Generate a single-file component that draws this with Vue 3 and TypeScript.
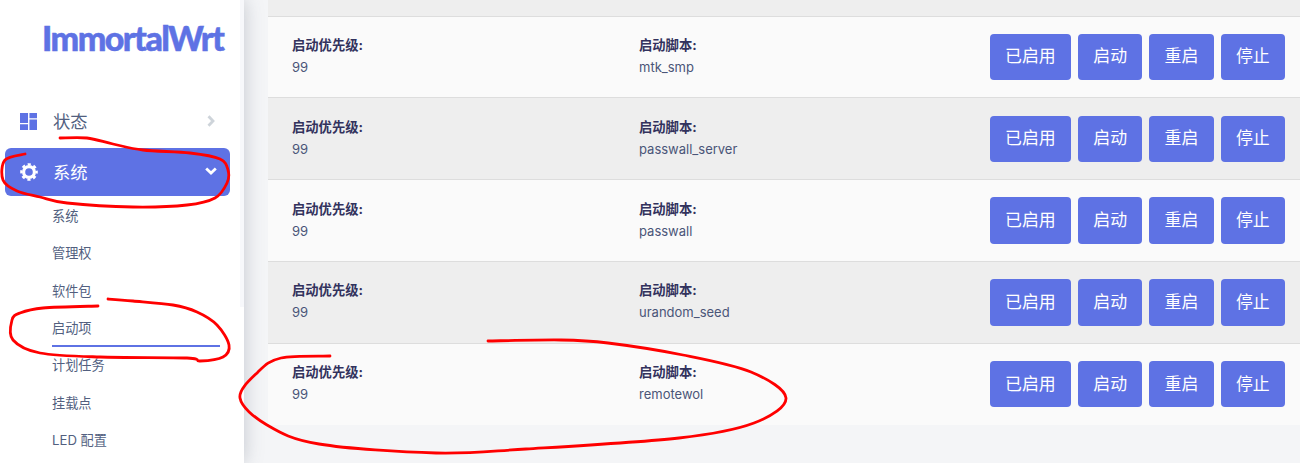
<script setup lang="ts">
type Pt = [number, number]

const rows: { name: string; even: boolean }[] = [
  { name: 'mtk_smp', even: false },
  { name: 'passwall_server', even: true },
  { name: 'passwall', even: false },
  { name: 'urandom_seed', even: true },
  { name: 'remotewol', even: false },
]
const actions = ['已启用', '启动', '重启', '停止']
const subItems = ['系统', '管理权', '软件包', '启动项', '计划任务', '挂载点', 'LED 配置']

function smooth(points: Pt[]): string {
  let d = `M${points[0][0]} ${points[0][1]}`
  for (let i = 0; i < points.length - 1; i++) {
    const p0 = points[Math.max(i - 1, 0)]
    const p1 = points[i]
    const p2 = points[i + 1]
    const p3 = points[Math.min(i + 2, points.length - 1)]
    const c1x = p1[0] + (p2[0] - p0[0]) / 6
    const c1y = p1[1] + (p2[1] - p0[1]) / 6
    const c2x = p2[0] - (p3[0] - p1[0]) / 6
    const c2y = p2[1] - (p3[1] - p1[1]) / 6
    d += ` C${c1x.toFixed(1)} ${c1y.toFixed(1)} ${c2x.toFixed(1)} ${c2y.toFixed(1)} ${p2[0]} ${p2[1]}`
  }
  return d
}

const marks: string[] = [
  smooth([[60, 138], [87, 138], [113, 144], [143, 150], [190, 153], [220, 159], [228, 170], [227, 183], [215, 198], [187, 205], [133, 207], [67, 203], [40, 197], [17, 191], [3, 180], [5, 160], [25, 154]]),
  smooth([[98, 306], [43, 308], [20, 313], [12, 320], [13, 340], [40, 353], [100, 357], [187, 358], [200, 361], [223, 357], [229, 345], [217, 325], [197, 312], [173, 305], [133, 301], [108, 299]]),
  smooth([[330, 356], [281, 358], [258, 372], [240, 398], [267, 425], [319, 444], [436, 453], [526, 449], [679, 438], [754, 423], [786, 398], [751, 372], [683, 355], [608, 343], [561, 340], [488, 341]]),
]
</script>

<template>
  <div class="page">
    <aside class="sidebar">
      <div class="scroll-thumb"></div>
      <div class="logo">ImmortalWrt</div>
      <nav class="nav">
        <a class="top-item">
          <svg class="icon" viewBox="0 0 18 18" fill="#5e72e4">
            <path d="M0 0h8.5v10.5H0zM10 0h8v5.5h-8zM0 12h8.5v6H0zM10 7h8v11h-8z" />
          </svg>
          <span class="top-label">状态</span>
          <svg class="chev" viewBox="0 0 8 12" fill="none" stroke="#ced4da" stroke-width="2.8">
            <path d="M1.5 1.2L6 6l-4.5 4.8" />
          </svg>
        </a>
        <a class="top-item active">
          <svg class="icon" viewBox="0 0 18 18" fill="none" stroke="#fff">
            <circle cx="9" cy="9" r="5.4" stroke-width="3.2" />
            <circle cx="9" cy="9" r="7.7" stroke-width="2.2" stroke-dasharray="3.2 2.85" stroke-dashoffset="1.6" />
          </svg>
          <span class="top-label">系统</span>
          <svg class="chev-down" viewBox="0 0 12 8" fill="none" stroke="#fff" stroke-width="2.8">
            <path d="M1.2 1.5L6 6l4.8-4.5" />
          </svg>
        </a>
        <ul class="sub">
          <li v-for="item in subItems" :key="item" class="sub-item" :class="{ current: item === '启动项' }">{{ item }}</li>
        </ul>
      </nav>
    </aside>

    <main class="main">
      <div class="top-stripe"></div>
      <div v-for="row in rows" :key="row.name" class="row" :class="{ even: row.even }">
        <div class="cell">
          <div class="label">启动优先级:</div>
          <div class="value">99</div>
        </div>
        <div class="cell">
          <div class="label">启动脚本:</div>
          <div class="value">{{ row.name }}</div>
        </div>
        <div class="actions">
          <button v-for="a in actions" :key="a" class="btn" type="button">{{ a }}</button>
        </div>
      </div>
    </main>

    <svg class="marks" viewBox="0 0 1300 463" fill="none" stroke="#f00" stroke-width="2.8" stroke-linecap="round" stroke-linejoin="round">
      <path v-for="(d, i) in marks" :key="i" :d="d" />
    </svg>
  </div>
</template>

<style>
html, body { margin: 0; padding: 0; overflow: hidden; }
</style>

<style scoped>
.page {
  position: relative;
  display: flex;
  width: 1300px;
  height: 463px;
  overflow: hidden;
  background: #f4f5f7;
  font-family: Inter, "Noto Sans CJK SC", sans-serif;
  color: #525f7f;
}
.sidebar {
  position: relative;
  z-index: 1;
  flex: 0 0 244px;
  box-sizing: border-box;
  background: #fff;
  box-shadow: 0 0 18px rgba(70, 80, 100, 0.28);
}
.scroll-thumb {
  position: absolute;
  top: 0;
  right: 0;
  width: 4px;
  height: 307px;
  background: #f7f8fb;
}
.logo {
  margin: 20px 0 0 42px;
  height: 36px;
  line-height: 36px;
  font-family: Lato, sans-serif;
  font-weight: 900;
  font-size: 34px;
  letter-spacing: -1.55px;
  -webkit-text-stroke: 0.5px #5e72e4;
  color: #5e72e4;
  white-space: nowrap;
}
.nav {
  margin-top: 41px;
}
.top-item {
  display: flex;
  align-items: center;
  height: 48px;
  margin: 0 14px 3px 5px;
  padding: 0 12px 0 15px;
  border-radius: 6px;
  font-size: 17.3px;
  color: #525f7f;
}
.top-item.active {
  background: #5e72e4;
  color: #fff;
  margin-bottom: 0;
}
.icon {
  width: 17px;
  height: 17px;
  flex: none;
}
.active .icon {
  width: 18px;
  height: 18px;
}
.top-label {
  margin-left: 16px;
  padding-bottom: 2px;
  flex: 1;
}
.active .top-label {
  margin-left: 15px;
}
.chev {
  width: 8px;
  height: 12px;
  margin-right: 3px;
}
.chev-down {
  width: 12px;
  height: 8px;
  margin-right: 1px;
  margin-bottom: 2px;
}
.sub {
  list-style: none;
  margin: 2px 0 0;
  padding: 0;
}
.sub-item {
  box-sizing: border-box;
  height: 37.33px;
  line-height: 36px;
  margin: 0 24px 0 52px;
  font-size: 13.2px;
  color: #525f7f;
}
.sub-item.current {
  border-bottom: 2px solid #5e72e4;
}
.main {
  flex: 1;
  padding-left: 24px;
  min-width: 0;
}
.top-stripe {
  height: 15.6px;
  background: #eee;
}
.row {
  display: grid;
  grid-template-columns: 347px 1fr auto;
  align-items: start;
  box-sizing: border-box;
  height: 81.8px;
  padding: 17.2px 15px 0 24px;
  border-top: 1px solid #ddd;
  background: #fafafa;
}
.row.even {
  background: #eee;
}
.cell {
  padding-top: 1.2px;
}
.label {
  font-size: 13.3px;
  line-height: 20px;
  font-weight: 700;
  color: #32325d;
}
.value {
  margin-top: 2px;
  font-size: 13px;
  line-height: 20px;
  color: #4a5578;
}
.actions {
  display: flex;
  gap: 6.95px;
}
.btn {
  box-sizing: border-box;
  height: 46.4px;
  padding: 0 15.3px 4px;
  border: 0;
  border-radius: 4px;
  background: #5e72e4;
  color: #fff;
  font-family: inherit;
  font-size: 16.9px;
}
.marks {
  position: absolute;
  inset: 0;
  z-index: 2;
  width: 1300px;
  height: 463px;
  pointer-events: none;
}
</style>
